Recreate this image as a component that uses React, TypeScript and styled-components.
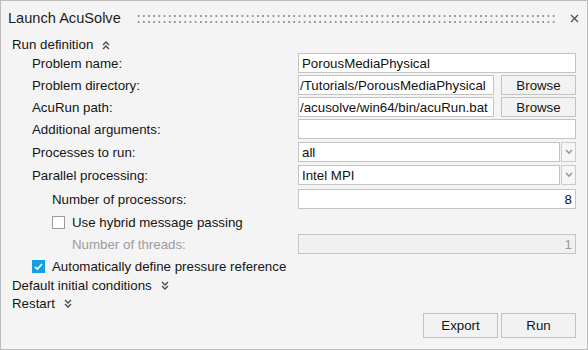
import React from "react"
import styled, { createGlobalStyle } from "styled-components"

const GlobalStyle = createGlobalStyle`
  html, body {
    margin:0;
    padding:0;
    background:#f4f4f4;
  }
  body {
    font-family:"Liberation Sans", Arial, sans-serif;
  }
`

const DoubleChevron = ({ up }: { up?: boolean }) => (
  <svg width="8" height="10" viewBox="0 0 8 10" style={{ transform: up ? "none" : "rotate(180deg)" }}>
    <path d="M1 5 L4 2 L7 5 M1 9 L4 6 L7 9" fill="none" stroke="#4a4a4a" strokeWidth="1.4" />
  </svg>
)

const ComboArrow = () => (
  <svg width="8" height="6" viewBox="0 0 8 6">
    <path d="M1 1 L4 4 L7 1" fill="none" stroke="#9c9c9c" strokeWidth="1.6" />
  </svg>
)

const CheckMark = () => (
  <svg width="13" height="13" viewBox="0 0 13 13">
    <path d="M3 6.8 L5.4 9 L10 4" fill="none" stroke="#fff" strokeWidth="1.6" />
  </svg>
)

const App = () => {
  return (
    <>
      <GlobalStyle />
      <Window>
        <TitleBar>
          <Title>Launch AcuSolve</Title>
          <Grip />
          <CloseButton>
            <svg width="9" height="9" viewBox="0 0 9 9">
              <path d="M1 1 L8 8 M8 1 L1 8" fill="none" stroke="#505050" strokeWidth="1.3" />
            </svg>
          </CloseButton>
        </TitleBar>

        <SectionHeader>
          <span>Run definition</span>
          <DoubleChevron up />
        </SectionHeader>

        <Form>
          <Row>
            <Label>Problem name:</Label>
            <Field>PorousMediaPhysical</Field>
          </Row>
          <Row $top={2}>
            <Label>Problem directory:</Label>
            <FieldWithButton>
              <Field $flush>/Tutorials/PorousMediaPhysical</Field>
              <Button>Browse</Button>
            </FieldWithButton>
          </Row>
          <Row $top={2}>
            <Label>AcuRun path:</Label>
            <FieldWithButton>
              <Field $flush>/acusolve/win64/bin/acuRun.bat</Field>
              <Button>Browse</Button>
            </FieldWithButton>
          </Row>
          <Row $top={2}>
            <Label>Additional arguments:</Label>
            <Field />
          </Row>
          <Row $top={3}>
            <Label>Processes to run:</Label>
            <Combo>
              <Field>all</Field>
              <ComboButton><ComboArrow /></ComboButton>
            </Combo>
          </Row>
          <Row $top={3}>
            <Label>Parallel processing:</Label>
            <Combo>
              <Field>Intel MPI</Field>
              <ComboButton><ComboArrow /></ComboButton>
            </Combo>
          </Row>
          <Row $top={4}>
            <Label $indent={20}>Number of processors:</Label>
            <Field $right>8</Field>
          </Row>
          <CheckRow $top={3} $indent={20}>
            <Box />
            <span>Use hybrid message passing</span>
          </CheckRow>
          <Row $top={2}>
            <Label $indent={40} $disabled>Number of threads:</Label>
            <Field $right $disabled>1</Field>
          </Row>
          <CheckRow $top={2}>
            <Box $checked><CheckMark /></Box>
            <span>Automatically define pressure reference</span>
          </CheckRow>
        </Form>

        <SectionHeader>
          <span>Default initial conditions</span>
          <DoubleChevron />
        </SectionHeader>
        <SectionHeader>
          <span>Restart</span>
          <DoubleChevron />
        </SectionHeader>

        <Footer>
          <Button $wide>Export</Button>
          <Button $wide>Run</Button>
        </Footer>
      </Window>
    </>
  )
}

export default App

const Window = styled.div`
  width:588px;
  height:350px;
  box-sizing:border-box;
  border:1px solid #bdbdbd;
  background:#f4f4f4;
  display:flex;
  flex-direction:column;
  font-size:13.3px;
  color:#151515;
  padding:0 11px 0 11px;
`

const TitleBar = styled.div`
  height:34px;
  display:flex;
  align-items:center;
  margin-left:-4px;
`

const Title = styled.div`
  font-size:14.6px;
  color:#1c1c1c;
`

const Grip = styled.div`
  flex:1;
  height:9px;
  margin:0 12px 0 15px;
  background-image:radial-gradient(circle, #949494 1px, transparent 1.3px);
  background-size:5.2px 6px;
  background-position:0 -1px;
`

const CloseButton = styled.div`
  width:10px;
  height:10px;
  display:flex;
  align-items:center;
  justify-content:center;
  margin-right:-3px;
`

const SectionHeader = styled.div`
  height:18px;
  display:flex;
  align-items:center;
  gap:9px;
  svg{
    margin-top:1px;
  }
`

const Form = styled.div`
  display:flex;
  flex-direction:column;
  padding-left:20px;
`

const Row = styled.div<{ $top?: number }>`
  display:grid;
  grid-template-columns:266px 1fr;
  align-items:center;
  height:20px;
  margin-top:${p => p.$top ?? 0}px;
`

const Label = styled.div<{ $indent?: number; $disabled?: boolean }>`
  padding-left:${p => p.$indent ?? 0}px;
  color:${p => (p.$disabled ? "#9c9c9c" : "#151515")};
  white-space:nowrap;
`

const Field = styled.div<{ $right?: boolean; $disabled?: boolean; $flush?: boolean }>`
  height:20px;
  box-sizing:border-box;
  border:1px solid #c4c4c4;
  background:${p => (p.$disabled ? "#f0f0f0" : "#fff")};
  color:${p => (p.$disabled ? "#9a9a9a" : "#111")};
  padding:0 ${p => (p.$flush ? "1px" : "3px")};
  display:flex;
  align-items:center;
  justify-content:${p => (p.$right ? "flex-end" : "flex-start")};
  white-space:nowrap;
  overflow:hidden;
  min-width:0;
`

const FieldWithButton = styled.div`
  display:grid;
  grid-template-columns:1fr 75px;
  gap:7px;
  height:20px;
`

const Combo = styled.div`
  display:grid;
  grid-template-columns:1fr 15px;
  gap:1px;
  height:20px;
`

const ComboButton = styled.div`
  box-sizing:border-box;
  border:1px solid #cbcbcb;
  background:#f6f6f6;
  display:flex;
  align-items:center;
  justify-content:center;
`

const Button = styled.div<{ $wide?: boolean }>`
  box-sizing:border-box;
  height:${p => (p.$wide ? "25px" : "20px")};
  width:${p => (p.$wide ? "75px" : "auto")};
  border:1px solid #c2c2c2;
  background:#f2f2f2;
  display:flex;
  align-items:center;
  justify-content:center;
  color:#151515;
`

const CheckRow = styled.div<{ $top?: number; $indent?: number }>`
  display:flex;
  align-items:center;
  gap:7px;
  height:20px;
  margin-top:${p => p.$top ?? 0}px;
  padding-left:${p => p.$indent ?? 0}px;
`

const Box = styled.div<{ $checked?: boolean }>`
  width:13px;
  height:13px;
  box-sizing:border-box;
  border:1px solid ${p => (p.$checked ? "#16a0e3" : "#9b9b9b")};
  background:${p => (p.$checked ? "#16a0e3" : "#fff")};
  display:flex;
  align-items:center;
  justify-content:center;
  svg{
    flex:none;
  }
`

const Footer = styled.div`
  display:flex;
  justify-content:flex-end;
  gap:3px;
  margin-top:1px;
`
